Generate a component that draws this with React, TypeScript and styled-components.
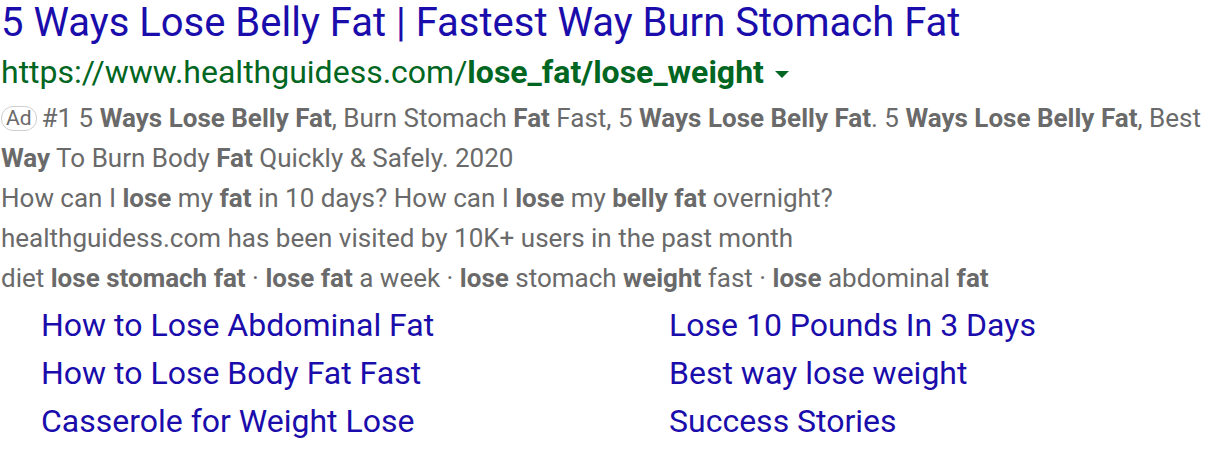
import styled, { createGlobalStyle } from "styled-components";

const GlobalStyle = createGlobalStyle`
  body {
    margin: 0;
    background: #ffffff;
    font-family: Roboto, "Liberation Sans", Arial, sans-serif;
  }
`;

const Result = styled.div`
  width: 1212px;
  padding: 0 0 0 1px;
`;

const Title = styled.a`
  display: block;
  color: #1a0dab;
  font-size: 40px;
  line-height: 46px;
  text-decoration: none;
`;

const UrlRow = styled.div`
  display: flex;
  align-items: center;
  color: #006621;
  font-size: 32px;
  line-height: 52px;
  b {
    font-weight: 700;
  }
`;

const Caret = styled.span`
  display: inline-block;
  margin: 4px 0 0 11px;
  width: 0;
  height: 0;
  border-left: 7px solid transparent;
  border-right: 7px solid transparent;
  border-top: 7px solid #006621;
`;

const Text = styled.div`
  color: #6a6a6a;
  font-size: 26px;
  line-height: 40px;
  b {
    font-weight: 700;
  }
`;

const AdBadge = styled.span`
  display: inline-block;
  border: 1px solid #cfcfcf;
  border-radius: 12px;
  color: #6a6a6a;
  font-size: 21px;
  line-height: 23px;
  padding: 0 4px;
  margin-right: 5px;
  vertical-align: 2px;
`;

const Sitelinks = styled.div`
  display: grid;
  grid-template-columns: 628px 1fr;
  padding-left: 40px;
  margin-top: 3px;
`;

const Sitelink = styled.a`
  color: #1a0dab;
  font-size: 32px;
  line-height: 48px;
  text-decoration: none;
`;

const links = [
  "How to Lose Abdominal Fat",
  "Lose 10 Pounds In 3 Days",
  "How to Lose Body Fat Fast",
  "Best way lose weight",
  "Casserole for Weight Lose",
  "Success Stories",
];

export default function App() {
  return (
    <>
      <GlobalStyle />
      <Result>
        <Title href="#">5 Ways Lose Belly Fat | Fastest Way Burn Stomach Fat</Title>
        <UrlRow>
          <span>
            https://www.healthguidess.com/<b>lose_fat/lose_weight</b>
          </span>
          <Caret />
        </UrlRow>
        <Text>
          <AdBadge>Ad</AdBadge>#1 5 <b>Ways Lose Belly Fat</b>, Burn Stomach <b>Fat</b> Fast, 5{" "}
          <b>Ways Lose Belly Fat</b>. 5 <b>Ways Lose Belly Fat</b>, Best <b>Way</b> To Burn Body{" "}
          <b>Fat</b> Quickly &amp; Safely. 2020
        </Text>
        <Text>
          How can I <b>lose</b> my <b>fat</b> in 10 days? How can I <b>lose</b> my <b>belly fat</b>{" "}
          overnight?
        </Text>
        <Text>healthguidess.com has been visited by 10K+ users in the past month</Text>
        <Text>
          diet <b>lose stomach fat</b> · <b>lose fat</b> a week · <b>lose</b> stomach <b>weight</b> fast
          · <b>lose</b> abdominal <b>fat</b>
        </Text>
        <Sitelinks>
          {links.map((l) => (
            <Sitelink key={l} href="#">
              {l}
            </Sitelink>
          ))}
        </Sitelinks>
      </Result>
    </>
  );
}
